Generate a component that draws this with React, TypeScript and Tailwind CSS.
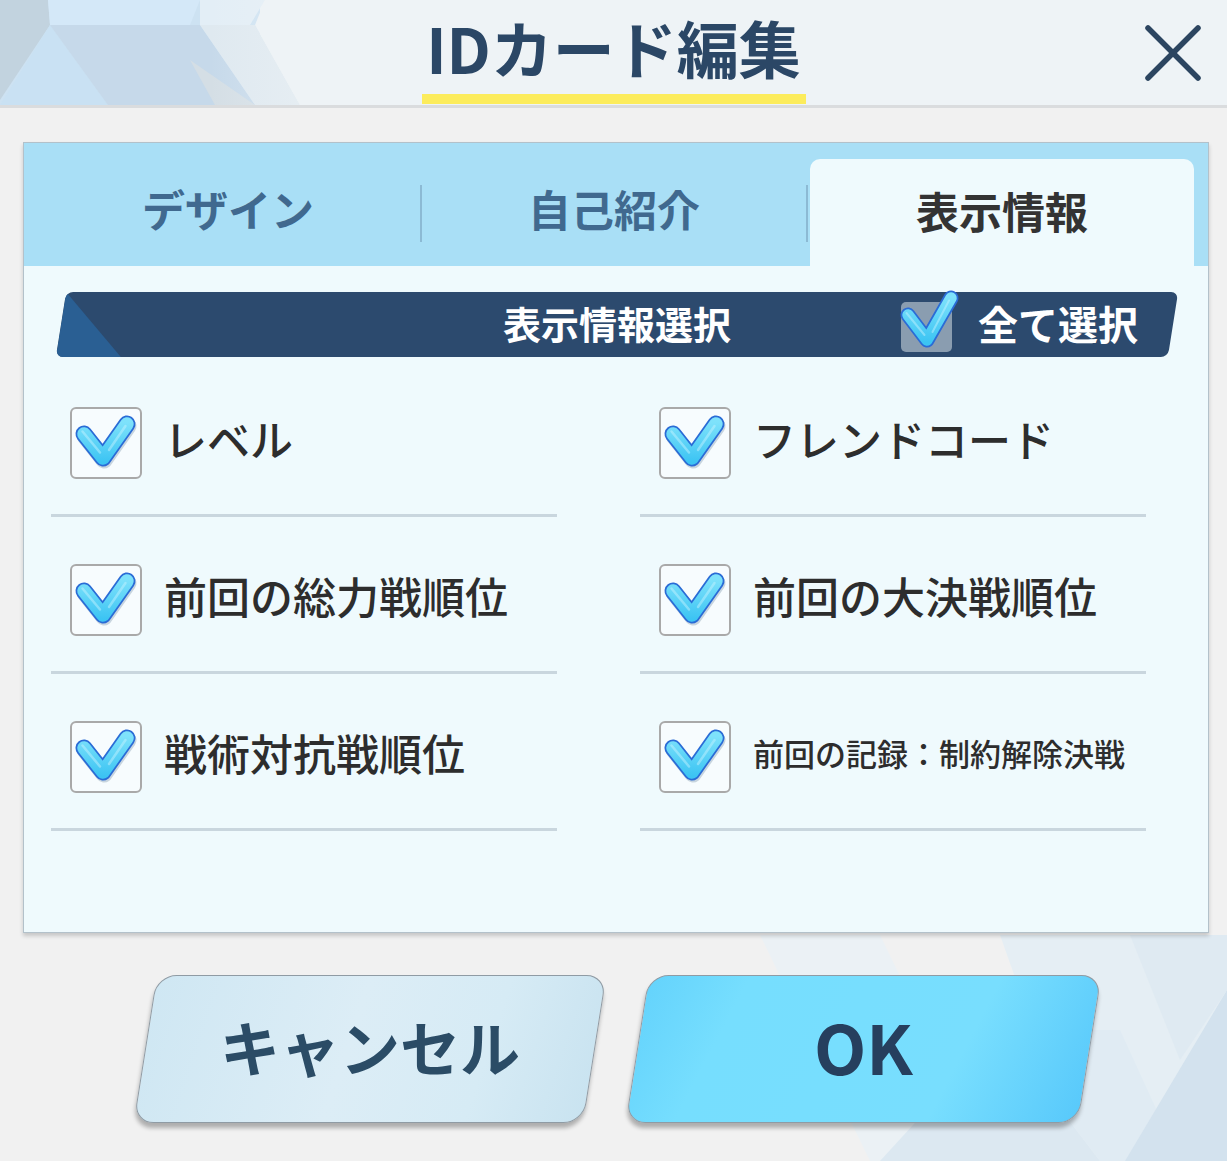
import React from "react";

type Item = { label: string; text: string };

const items: Item[] = [
  { label: "レベル", text: "text-[43px]" },
  { label: "フレンドコード", text: "text-[43px]" },
  { label: "前回の総力戦順位", text: "text-[43px]" },
  { label: "前回の大決戦順位", text: "text-[43px]" },
  { label: "戦術対抗戦順位", text: "text-[43px]" },
  { label: "前回の記録：制約解除決戦", text: "text-[31px]" },
];

// big glossy check used in the rows
const RowCheck = () => (
  <svg
    viewBox="0 0 72 72"
    className="absolute -left-[2px] -top-[2px] h-[72px] w-[72px] overflow-visible"
    fill="none"
    strokeLinecap="round"
    strokeLinejoin="round"
  >
    <defs>
      <linearGradient id="rowFill" x1="0" y1="15" x2="0" y2="55" gradientUnits="userSpaceOnUse">
        <stop offset="0" stopColor="#7ee2fb" />
        <stop offset="1" stopColor="#3cc4f3" />
      </linearGradient>
    </defs>
    <path d="M14 27 L33 51 L57 17" stroke="#0f3a66" strokeOpacity="0.2" strokeWidth="17" transform="translate(1 2)" />
    <path d="M14 27 L33 51 L57 17" stroke="#2a6cd6" strokeWidth="17" />
    <path d="M14 27 L33 51 L57 17" stroke="url(#rowFill)" strokeWidth="13.5" />
    <path d="M12.5 24.5 L30 45.5 M39 43 L55.5 19" stroke="#c9f5ff" strokeOpacity="0.45" strokeWidth="2.5" />
  </svg>
);

const HeadCheck = () => (
  <svg
    viewBox="0 0 50 50"
    className="absolute left-0 top-0 h-[50px] w-[50px] overflow-visible"
    fill="none"
    strokeLinecap="round"
    strokeLinejoin="round"
  >
    <defs>
      <linearGradient id="headFill" x1="0" y1="-5" x2="0" y2="40" gradientUnits="userSpaceOnUse">
        <stop offset="0" stopColor="#7ee2fb" />
        <stop offset="1" stopColor="#3cc4f3" />
      </linearGradient>
    </defs>
    <path d="M7 13 L26 38 L50 -4" stroke="#2a6cd6" strokeWidth="15" />
    <path d="M7 13 L26 38 L50 -4" stroke="url(#headFill)" strokeWidth="11.5" />
    <path d="M5.5 11 L23.5 33 M31.5 30 L48 -1.5" stroke="#c9f5ff" strokeOpacity="0.45" strokeWidth="2" />
  </svg>
);

const Row = ({ item }: { item: Item }) => (
  <div className="h-[157px] border-b-[3px] border-[#c9d6de] pl-[19px] pt-[47px]">
    <div className="flex h-[72px] items-center">
      <div className="relative h-[72px] w-[72px] shrink-0 rounded-[6px] border-2 border-[#a9a9a9] bg-[#f7fcfe]">
        <RowCheck />
      </div>
      <span className={`${item.text} ml-[22px] whitespace-nowrap pb-[9px] font-medium leading-none text-[#2d2d2d]`}>
        {item.label}
      </span>
    </div>
  </div>
);

const App = () => {
  return (
    <div className="relative isolate h-[1161px] w-[1227px] overflow-hidden bg-[#f1f1f1] font-['Noto_Sans_CJK_JP',sans-serif]">
      {/* lower right backdrop */}
      <svg className="absolute bottom-0 left-0 -z-10 h-[230px] w-[1227px]" viewBox="0 931 1227 230">
        <polygon points="760,935 880,935 990,1161 870,1161" fill="#ebf1f5" />
        <polygon points="1000,935 1227,935 1227,1161 1080,1161" fill="#e5eef4" />
        <polygon points="880,1161 1000,1030 1100,1161" fill="#dce8f1" />
        <polygon points="1000,1030 1120,1030 1180,1161 1100,1161" fill="#e0ebf3" />
        <polygon points="1227,990 1227,1161 1125,1161" fill="#d3e2ee" />
        <polygon points="1130,935 1227,935 1227,990 1180,1060" fill="#dfeaf2" />
      </svg>

      {/* header */}
      <div className="relative isolate grid h-[108px] grid-cols-[1fr_auto_1fr] border-b-[3px] border-[#dadcde] bg-[#eef3f6]">
        <svg className="absolute left-0 top-0 -z-10 h-[105px] w-[420px]" viewBox="0 0 420 105">
          <defs>
            <linearGradient id="fade" x1="0" y1="0" x2="420" y2="0" gradientUnits="userSpaceOnUse">
              <stop offset="0.5" stopColor="#eef3f6" stopOpacity="0" />
              <stop offset="1" stopColor="#eef3f6" stopOpacity="1" />
            </linearGradient>
          </defs>
          <rect x="0" y="0" width="260" height="105" fill="#cde2f2" />
          <polygon points="0,0 48,0 50,25 0,100" fill="#c2d3df" />
          <polygon points="48,0 200,0 190,25 50,25" fill="#d4e8f8" />
          <polygon points="50,25 0,105 108,105" fill="#c9e1f3" />
          <polygon points="50,25 200,25 255,105 108,105" fill="#c6d9ea" />
          <polygon points="200,0 265,0 250,25 200,25" fill="#e3eef6" />
          <polygon points="200,25 255,25 300,105 255,105" fill="#dfe9f0" />
          <polygon points="190,60 215,105 255,105" fill="#d4dee5" />
          <polygon points="255,0 420,0 420,105 300,105 255,25 265,0" fill="#eef3f6" />
          <rect x="0" y="0" width="420" height="105" fill="url(#fade)" />
        </svg>
        <div />
        <div className="flex flex-col items-center pt-[16px]">
          <h1 className="h-[62px] whitespace-nowrap text-[62px] font-bold leading-none text-[#2b4766]">
            IDカード編集
          </h1>
          <div className="mt-[16px] h-[10px] w-[384px] bg-[#fcec5c]" />
        </div>
        <div className="flex items-center justify-end pr-[26px]">
          <svg viewBox="0 0 56 56" className="h-[56px] w-[56px]" fill="none" stroke="#2c4560" strokeWidth="5.5" strokeLinecap="round">
            <line x1="3" y1="3" x2="53" y2="53" />
            <line x1="53" y1="3" x2="3" y2="53" />
          </svg>
        </div>
      </div>

      {/* panel */}
      <div className="ml-[23px] mt-[34px] flex h-[791px] w-[1186px] flex-col border border-[#b3c1ca] bg-[#effafd] shadow-[0_3px_4px_rgba(0,0,0,0.18)]">
        <div className="flex h-[123px] items-end bg-[#a9dff6] pl-[12px] pr-[14px] pt-[16px]">
          <div className="flex h-full w-[384px] items-center justify-center pb-[8px] text-[43px] font-bold leading-none text-[#40698f]">
            デザイン
          </div>
          <div className="mb-[-2px] h-[57px] w-[2px] self-center bg-[#8cbad4]" />
          <div className="flex h-full w-[384px] items-center justify-center pb-[8px] text-[43px] font-bold leading-none text-[#40698f]">
            自己紹介
          </div>
          <div className="mb-[-2px] h-[57px] w-[2px] self-center bg-[#8cbad4]" />
          <div className="ml-[2px] flex h-full w-[384px] items-center justify-center rounded-t-[10px] bg-[#effafd] pb-[4px] text-[43px] font-bold leading-none text-[#333333]">
            表示情報
          </div>
        </div>

        <div className="flex-1">
          <div className="relative ml-[37px] mt-[26px] h-[65px] w-[1112px] skew-x-[-9deg] rounded-[7px] bg-[#2c4a6e]">
            <div className="absolute left-0 top-0 h-full w-[65px] rounded-l-[7px] bg-[#2a5f93] [clip-path:polygon(0_0,100%_100%,0_100%)]" />
            <div className="relative flex h-full skew-x-[9deg] items-center justify-center">
              <span className="pb-[4px] text-[38px] font-bold leading-none text-white">表示情報選択</span>
              <div className="absolute right-[35px] top-0 flex h-full items-center">
                <div className="relative mt-[4px] h-[50px] w-[51px] rounded-[5px] bg-[#8a9db0]">
                  <HeadCheck />
                </div>
                <span className="ml-[26px] pb-[4px] text-[40px] font-bold leading-none text-white">全て選択</span>
              </div>
            </div>
          </div>

          <div className="ml-[27px] mt-[3px] grid grid-cols-[506px_506px] gap-x-[83px]">
            {items.map((item) => (
              <Row key={item.label} item={item} />
            ))}
          </div>
        </div>
      </div>

      {/* buttons */}
      <div className="ml-[145px] mt-[42px] flex gap-[42px]">
        <button className="h-[148px] w-[450px] skew-x-[-9deg] rounded-[20px] border border-[#8f9ba4] bg-[linear-gradient(100deg,#cfe7f3_0%,#dcedf6_45%,#d6ebf5_75%,#c9e3f0_100%)] shadow-[0_5px_4px_rgba(0,0,0,0.28)]">
          <span className="block skew-x-[9deg] pb-[6px] text-[60px] font-bold leading-none text-[#2b4c66]">キャンセル</span>
        </button>
        <button className="h-[148px] w-[453px] skew-x-[-9deg] rounded-[20px] border border-[#8f9ba4] bg-[linear-gradient(110deg,#64d3fc_0%,#76defe_20%,#78defe_70%,#58c9fb_100%)] shadow-[0_5px_4px_rgba(0,0,0,0.28)]">
          <span className="block skew-x-[9deg] pb-[6px] text-[68px] font-bold leading-none text-[#263f5e]">OK</span>
        </button>
      </div>
    </div>
  );
};

export default App;
